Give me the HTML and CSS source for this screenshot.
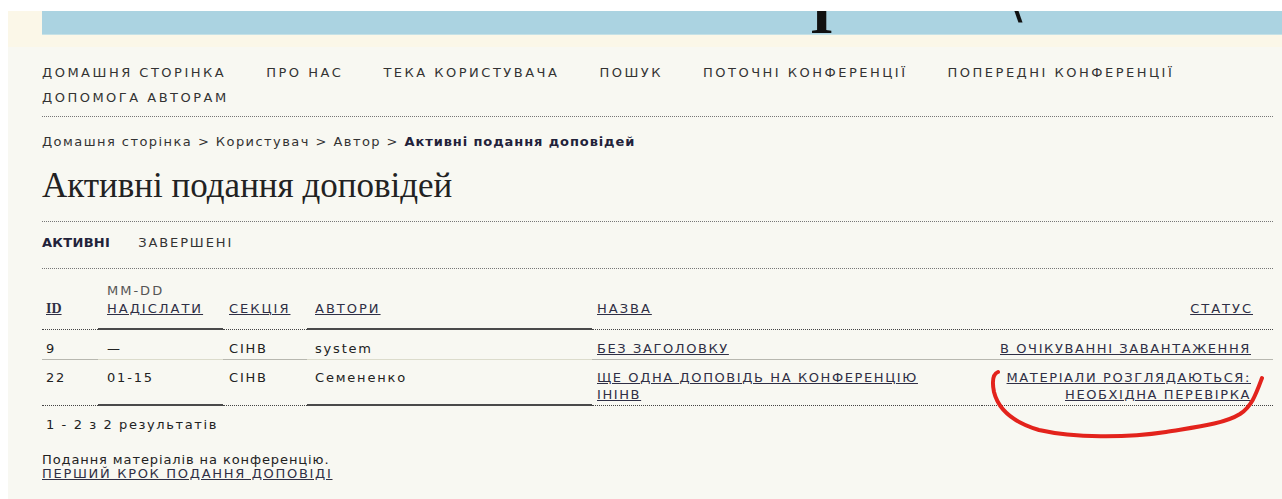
FILE: index.html
```html
<!DOCTYPE html>
<html lang="uk">
<head>
<meta charset="utf-8">
<title>Активні подання доповідей</title>
<link rel="stylesheet" href="styles.css">
</head>
<body>
<div class="page">
  <div class="header-zone">
    <header class="banner">
      <h1 class="site-title"><span class="title-a">І</span><span class="title-b">\</span></h1>
    </header>
  </div>

  <div class="main">
    <ul class="nav">
      <li><a href="#">Домашня сторінка</a></li>
      <li><a href="#">Про нас</a></li>
      <li><a href="#">Тека користувача</a></li>
      <li><a href="#">Пошук</a></li>
      <li><a href="#">Поточні конференції</a></li>
      <li><a href="#">Попередні конференції</a></li>
      <li><a href="#">Допомога авторам</a></li>
    </ul>

    <div class="crumbs">
      <a href="#">Домашня сторінка</a> &gt; <a href="#">Користувач</a> &gt; <a href="#">Автор</a> &gt; <a href="#" class="current">Активні подання доповідей</a>
    </div>

    <h2 class="page-title">Активні подання доповідей</h2>

    <ul class="tabs">
      <li class="tab active"><a href="#">Активні</a></li>
      <li class="tab"><a href="#">Завершені</a></li>
    </ul>

    <div class="listing-wrap">
      <table class="listing">
        <thead>
          <tr>
            <th class="c-id"><a href="#" class="id-link">ID</a></th>
            <th class="c-date"><span class="sub">MM-DD</span><br><a href="#">Надіслати</a></th>
            <th class="c-sec"><a href="#">Секція</a></th>
            <th class="c-auth"><a href="#">Автори</a></th>
            <th class="c-title"><a href="#">Назва</a></th>
            <th class="c-status"><a href="#">Статус</a></th>
          </tr>
        </thead>
        <tbody>
          <tr>
            <td class="c-id">9</td>
            <td class="c-date">&mdash;</td>
            <td class="c-sec">CIHB</td>
            <td class="c-auth">system</td>
            <td class="c-title"><a href="#">Без заголовку</a></td>
            <td class="c-status"><a href="#">В очікуванні завантаження</a></td>
          </tr>
          <tr>
            <td class="c-id">22</td>
            <td class="c-date">01-15</td>
            <td class="c-sec">CIHB</td>
            <td class="c-auth">Семененко</td>
            <td class="c-title"><a href="#">Ще одна доповідь на конференцію ІНІНВ</a></td>
            <td class="c-status"><a href="#">Матеріали розглядаються:<br>необхідна перевірка</a></td>
          </tr>
        </tbody>
      </table>

      <svg class="scribble" width="300" height="80" viewBox="0 0 300 80" aria-hidden="true">
        <path d="M12 6 C 7 8, 6 16, 8 26 C 12 42, 26 56, 53 64 C 88 72, 140 72, 180 66 C 210 61, 238 58, 254 48 C 266 40, 270 28, 276 12" fill="none" stroke="#e3231c" stroke-width="4" stroke-linecap="round"/>
      </svg>
    </div>

    <p class="count">1 - 2 з 2 результатів</p>

    <p class="start">Подання матеріалів на конференцію.<br><a href="#">Перший крок подання доповіді</a></p>
  </div>
</div>
</body>
</html>
```

FILE: styles.css
```css
* {
  box-sizing: border-box;
}

html,
body {
  margin: 0;
  padding: 0;
}

body {
  background: #ffffff;
  padding: 11px 0 0 8px;
  font-family: "DejaVu Sans", Verdana, sans-serif;
  font-size: 13px;
  color: #222222;
}

a {
  color: #2f2f45;
}

/* page shell */
.page {
  background: #f8f8f2;
  min-height: 488px;
}

.header-zone {
  background: #fbf7e8;
  padding: 0 0 12px 34px;
}

.banner {
  height: 24px;
  background: #abd3e1;
  border-bottom: 1px solid #c6e1e6;
  overflow: hidden;
}

.site-title {
  margin: 0;
  padding-left: 768px;
  display: flex;
  align-items: flex-start;
  font-family: "Liberation Serif", "Times New Roman", serif;
  font-weight: bold;
  color: #111111;
}

.title-a {
  font-size: 60px;
  line-height: 60px;
  margin-top: -28px;
}

.title-b {
  font-size: 60px;
  line-height: 60px;
  margin-top: -39px;
  margin-left: 172px;
}

.main {
  padding: 0 9px 0 34px;
}

/* top navigation */
.nav {
  display: flex;
  flex-wrap: wrap;
  list-style: none;
  margin: 0;
  padding: 13px 0 6px;
  border-bottom: 1px dotted #777777;
}

.nav li {
  margin-right: 40px;
  line-height: 25px;
}

.nav a {
  color: #333333;
  text-decoration: none;
  text-transform: uppercase;
  font-size: 13px;
  letter-spacing: 2.5px;
}

/* breadcrumbs */
.crumbs {
  margin-top: 17px;
  line-height: 16px;
  letter-spacing: 1.45px;
  color: #333333;
}

.crumbs a {
  color: #333333;
  text-decoration: none;
}

.crumbs .current {
  font-weight: bold;
  color: #22223a;
  letter-spacing: 0.9px;
}

/* heading */
.page-title {
  margin: 16px 0 0;
  padding-bottom: 15px;
  font-family: "Liberation Serif", "Times New Roman", serif;
  font-weight: normal;
  font-size: 35px;
  line-height: 40px;
  color: #222222;
  border-bottom: 1px dotted #777777;
}

/* tabs */
.tabs {
  display: flex;
  gap: 28px;
  list-style: none;
  margin: 0;
  padding: 13px 0 17px;
  line-height: 16px;
  border-bottom: 1px dotted #777777;
}

.tab a {
  color: #333333;
  text-decoration: none;
  text-transform: uppercase;
  letter-spacing: 1.9px;
}

.tab.active a {
  font-weight: bold;
  color: #22223a;
  letter-spacing: 0.3px;
}

/* listing table */
.listing-wrap {
  position: relative;
}

.listing {
  width: 100%;
  border-spacing: 0;
  margin-top: 13px;
}

.listing th,
.listing td {
  text-align: left;
  padding: 0;
  font-weight: normal;
}

.listing th {
  vertical-align: bottom;
  text-transform: uppercase;
  letter-spacing: 2px;
  line-height: 18px;
  padding-bottom: 10px;
  border-bottom: 2px solid #4a4a4a;
}

.listing th .sub {
  color: #555555;
}

.listing th a {
  color: #2f2f45;
}

.listing th .id-link {
  font-family: "Liberation Serif", "Times New Roman", serif;
  font-weight: bold;
  font-size: 14px;
  letter-spacing: 0;
}

.listing td {
  vertical-align: top;
  line-height: 17px;
  letter-spacing: 1.8px;
  padding-top: 9px;
  padding-bottom: 1px;
  border-bottom: 2px solid #4a4a4a;
}

.listing td a {
  text-transform: uppercase;
  letter-spacing: 1.6px;
}

.listing tbody tr:first-child td {
  padding-top: 10px;
  padding-bottom: 2px;
  border-bottom: 1px solid #dcdccc;
}

/* dotted columns */
.listing .c-id,
.listing .c-sec,
.listing .c-title,
.listing .c-status {
  border-bottom-style: dotted;
  border-bottom-width: 1px;
  border-bottom-color: #444444;
}

.listing thead .c-id,
.listing thead .c-sec,
.listing thead .c-title,
.listing thead .c-status {
  padding-bottom: 11px;
}

.listing tbody tr:last-child .c-id,
.listing tbody tr:last-child .c-sec,
.listing tbody tr:last-child .c-title,
.listing tbody tr:last-child .c-status {
  padding-bottom: 2px;
}

.listing tbody tr:first-child .c-id,
.listing tbody tr:first-child .c-sec,
.listing tbody tr:first-child .c-title,
.listing tbody tr:first-child .c-status {
  border-bottom-color: #b8b8b0;
}

.listing .c-id {
  width: 56px;
  padding-left: 4px;
}

.listing .c-date {
  width: 125px;
  padding-left: 9px;
}

.listing .c-sec {
  width: 84px;
  padding-left: 6px;
}

.listing .c-auth {
  width: 285px;
  padding-left: 8px;
}

.listing .c-title {
  width: 390px;
  padding-left: 5px;
  padding-right: 30px;
}

.listing .c-status {
  text-align: right;
  padding-right: 20px;
}

.listing td.c-status {
  padding-right: 22px;
}

/* hand-drawn marker ring */
.scribble {
  position: absolute;
  left: 944px;
  top: 84px;
  filter: blur(0.6px);
}

/* footer notes */
.count {
  margin: 11px 0 0;
  padding-left: 4px;
  line-height: 16px;
  letter-spacing: 1.6px;
}

.start {
  margin: 20px 0 0;
  line-height: 14px;
  letter-spacing: 0.9px;
}

.start a {
  text-transform: uppercase;
  letter-spacing: 1.7px;
}
```
